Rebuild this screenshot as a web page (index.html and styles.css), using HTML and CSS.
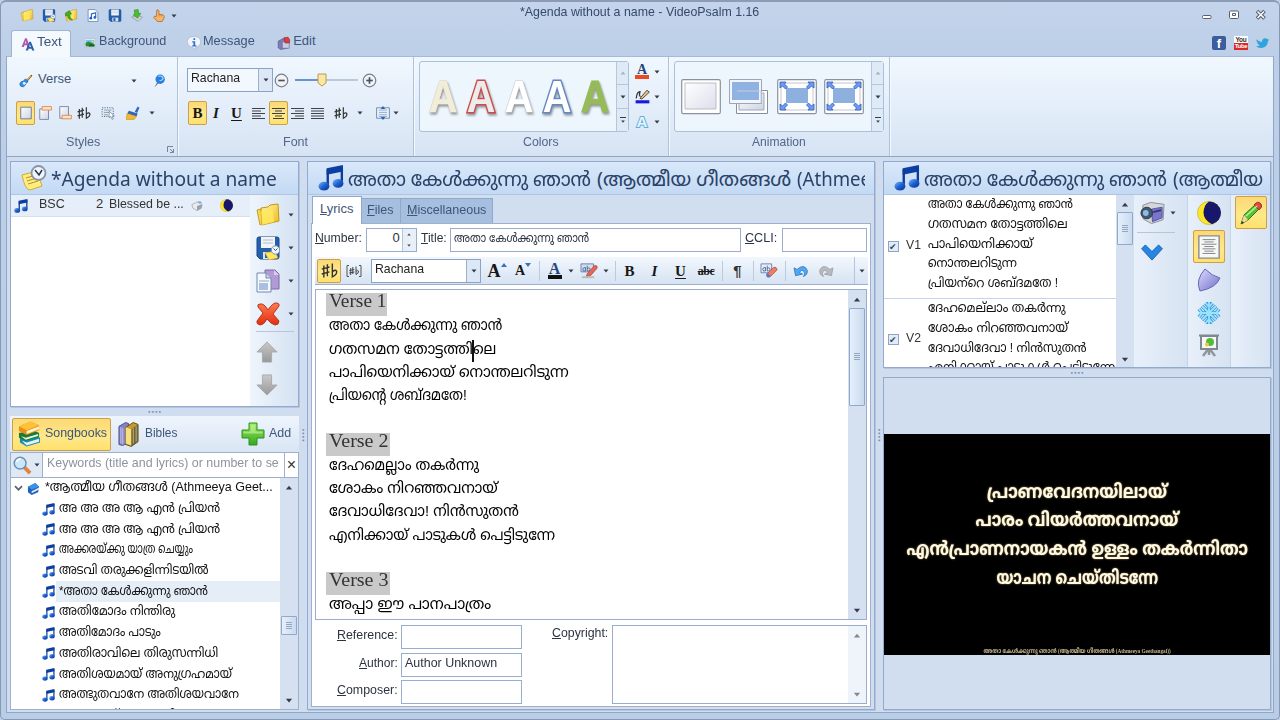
FILE: index.html
```html
<!DOCTYPE html>
<html lang="en">
<head>
<meta charset="utf-8">
<title>VideoPsalm</title>
<link rel="stylesheet" href="styles.css">
</head>
<body>
<svg class="defs" width="0" height="0">
<defs>
<linearGradient id="gy" x1="0" y1="0" x2="1" y2="1"><stop offset="0" stop-color="#fff6a0"/><stop offset="1" stop-color="#efb81c"/></linearGradient>
<linearGradient id="gb" x1="0" y1="0" x2="1" y2="1"><stop offset="0" stop-color="#7ab8f5"/><stop offset=".5" stop-color="#1c5fd0"/><stop offset="1" stop-color="#0a2f8c"/></linearGradient>
<linearGradient id="gg" x1="0" y1="0" x2="0" y2="1"><stop offset="0" stop-color="#9be860"/><stop offset="1" stop-color="#35a820"/></linearGradient>
<linearGradient id="gr" x1="0" y1="0" x2="0" y2="1"><stop offset="0" stop-color="#ff7a50"/><stop offset="1" stop-color="#e22f10"/></linearGradient>
<linearGradient id="gs" x1="0" y1="0" x2="0" y2="1"><stop offset="0" stop-color="#c9c9c9"/><stop offset="1" stop-color="#989898"/></linearGradient>
<linearGradient id="gp" x1="0" y1="0" x2="1" y2="1"><stop offset="0" stop-color="#fff"/><stop offset="1" stop-color="#cdd3e4"/></linearGradient>
<linearGradient id="gv" x1="0" y1="0" x2="1" y2="1"><stop offset="0" stop-color="#dcdcff"/><stop offset="1" stop-color="#6f6cc8"/></linearGradient>
<symbol id="folder" viewBox="0 0 24 24"><path d="M1 7l4-1 2 14-3 2z" fill="#f6d848" stroke="#b98c12" stroke-width=".8"/><path d="M5 5l7-1 2-2 8-1 1 17-17 4z" fill="url(#gy)" stroke="#c4961a" stroke-width="1"/><path d="M5 8l12-2 1 13-12 3z" fill="#ffe95e" opacity=".8"/></symbol>
<symbol id="folder-up" viewBox="0 0 24 24"><use href="#folder"/><path d="M2 8l7-5 4 6-3 1q-1 7 5 10-9 1-9-8l-4 1z" fill="#3fae2a" stroke="#23761a"/></symbol>
<symbol id="floppy" viewBox="0 0 24 24"><path d="M1 3q0-2 2-2h18q2 0 2 2v18q0 2-2 2H4l-3-3z" fill="#245fae" stroke="#17468a"/><path d="M5 1h14v11H5z" fill="#f1f3f7"/><path d="M7 4h10M7 7h10" stroke="#b5bcc8"/><path d="M7 16h11v7H7z" fill="#dce4ee"/><path d="M9 17h4v5H9z" fill="#245fae"/></symbol>
<symbol id="floppy-note" viewBox="0 0 24 24"><use href="#floppy"/><path d="M9 17l10-2 3 7-9 2z" fill="#ffe560" stroke="#c69d22" stroke-width=".6"/><circle cx="19.500" cy="14" r="4.200" fill="#eef5ff" stroke="#7891b8"/><path d="M17.500 12.500l2 2 2-2" fill="none" stroke="#345" stroke-width=".9"/></symbol>
<symbol id="notepage" viewBox="0 0 24 24"><path d="M3 1h13l5 5v17H3z" fill="#fff" stroke="#6885ad" stroke-width="1.500"/><path d="M9 17V9l8-2v8" fill="none" stroke="#1a5fca" stroke-width="2"/><circle cx="8" cy="17" r="2.500" fill="#1a5fca"/><circle cx="15.500" cy="15.500" r="2.500" fill="#1a5fca"/></symbol>
<symbol id="download" viewBox="0 0 24 24"><path d="M2 15l10-4 10 4-8 8z" fill="#ccd0d6" stroke="#7d838e"/><path d="M7 2l7-1 1 7 4 0-6 9-8-6 3-1z" fill="#4cc02c" stroke="#24861a"/></symbol>
<symbol id="hand" viewBox="0 0 24 24"><path d="M8 2q3-2 4 2v6l8 1q3 2 1 6l-3 6H9L2 15q1-3 5-1z" fill="#f5b56c" stroke="#b06b28" stroke-width="1.500"/><path d="M12 10v4M16 10v4" stroke="#b06b28"/></symbol>
<symbol id="caret" viewBox="0 0 6 4"><path d="M.5.500h5L3 3.500z" fill="#333c4c"/></symbol>
<symbol id="aa" viewBox="0 0 24 24"><path d="M1 17L7 2h3l5 15h-4l-1-3H6l-1 3zM7 11h2L8 6z" fill="#b05aa8"/><path d="M8 23l6-15h3l6 15h-4l-1-3h-5l-1 3zM14 17h3l-2-5z" fill="#2e62b0"/></symbol>
<symbol id="picture" viewBox="0 0 24 24"><path d="M1 4h22v17H1z" fill="#f3f7fa" stroke="#a4b3c4"/><path d="M3 6h18v7H3z" fill="#76c4ee"/><path d="M3 12l6-3 12 5v5H3z" fill="#2b8a35"/><path d="M9 19q3-9 8-3l4-1v4z" fill="#1d5c33"/><circle cx="17" cy="9" r="2" fill="#ffd33a"/></symbol>
<symbol id="info" viewBox="0 0 24 24"><path d="M12 1a10 9 0 0 1 3 18l-1 4-5-4A10 9 0 0 1 12 1z" fill="#f0f4fb" stroke="#9aabc9"/><path d="M11 4h3v3h-3zM9 9h5v7h2v2H9v-2h2v-5H9z" fill="#2f6fd0"/></symbol>
<symbol id="editpages" viewBox="0 0 24 24"><path d="M2 9l9-5 8 3-1 14-12 2-4-3z" fill="#7e7bb8" stroke="#4c4880"/><path d="M9 10h12v11H9z" fill="#c7cce4" stroke="#5f6393"/><path d="M12 3l7-1 3 5-1 5h-7z" fill="#d9403c" stroke="#8d2320"/></symbol>
<symbol id="guitar" viewBox="0 0 24 24"><path d="M13 12L22 2" stroke="#5b3a16" stroke-width="2.500"/><path d="M10 9q6-1 5 5-4 1-4 5-3 5-8 2-4-4 1-8 5 0 6-4z" fill="#3190e0" stroke="#1b5e9f"/><circle cx="9" cy="16" r="2.500" fill="#e9f4ff"/><path d="M14 10l7-7" stroke="#e2a63a" stroke-width="2"/></symbol>
<symbol id="pin" viewBox="0 0 24 24"><path d="M10 12L4 23l8-8" fill="#68788e"/><circle cx="14" cy="9" r="8" fill="#2a7fdc"/><path d="M11 4q6-2 8 3-1 5-6 4" fill="none" stroke="#a9d8ff" stroke-width="2"/></symbol>
<symbol id="page" viewBox="0 0 24 24"><path d="M3 2h18v20H3z" fill="url(#gp)" stroke="#5f6f8e" stroke-width="1.500"/></symbol>
<symbol id="page-top" viewBox="0 0 24 24"><path d="M3 5h15v18H3z" fill="url(#gp)" stroke="#6c82a6" stroke-width="1.500"/><path d="M7 1h16v6H7z" fill="#fbe2cb" stroke="#d88a45" stroke-width="1.500"/></symbol>
<symbol id="page-bottom" viewBox="0 0 24 24"><path d="M3 1h15v20H3z" fill="url(#gp)" stroke="#6c82a6" stroke-width="1.500"/><path d="M7 16h16v6H7z" fill="#fbe2cb" stroke="#d88a45" stroke-width="1.500"/></symbol>
<symbol id="sharpflat" viewBox="0 0 24 24"><path d="M4 5v17M9 3v17M1 10l11-3M1 17l11-3" fill="none" stroke="#333" stroke-width="2"/><path d="M16 2v19q7-3 6-8-2-3-6 1" fill="none" stroke="#333" stroke-width="2"/></symbol>
<symbol id="bracketed" viewBox="0 0 16 14"><path d="M3 1.500H1v11h2M13 1.500h2v11h-2" fill="none" stroke="#555"/><path d="M4.700 4v7M6.800 3v7M3.300 6.500l5-1M3.300 9l5-1M10 2.500v8q3-1.500 2.500-3.500-1-1.500-2.500.5" fill="none" stroke="#444" stroke-width="1"/></symbol>
<symbol id="select" viewBox="0 0 24 24"><path d="M2 3h19v15H2z" fill="none" stroke="#4d5c75" stroke-width="1.500" stroke-dasharray="2 2"/><path d="M5 7h13M5 11h9M5 15h7" stroke="#8292aa" stroke-width="1.500"/><path d="M14 9l9 8-4 0 2 5-2 1-2-5-3 2z" fill="#fff" stroke="#536485"/></symbol>
<symbol id="brush" viewBox="0 0 24 24"><path d="M15 10l5-9 3 2-4 9z" fill="#2c67be"/><path d="M5 8l15 5-2 5L2 13z" fill="#2c67be"/><path d="M2 13l16 5-4 5H0z" fill="#f5b930" stroke="#c48a1a"/></symbol>
<symbol id="minus" viewBox="0 0 16 16"><circle cx="8" cy="8" r="6.700" fill="#f1f3f6" stroke="#777f8d" stroke-width="1.300"/><path d="M4.500 8h7" stroke="#4a5361" stroke-width="1.800"/></symbol>
<symbol id="plus" viewBox="0 0 16 16"><use href="#minus"/><path d="M8 4.500v7" stroke="#4a5361" stroke-width="1.800"/></symbol>
<symbol id="al" viewBox="0 0 13 13"><path d="M0 1.500h13M0 4h9M0 6.500h13M0 9h9M0 11.500h13" stroke="#3c4148" stroke-width="1.200"/></symbol>
<symbol id="ac" viewBox="0 0 13 13"><path d="M0 1.500h13M3 4h7M0 6.500h13M3 9h7M1 11.500h11" stroke="#3c4148" stroke-width="1.200"/></symbol>
<symbol id="ar" viewBox="0 0 13 13"><path d="M0 1.500h13M4 4h9M0 6.500h13M4 9h9M0 11.500h13" stroke="#3c4148" stroke-width="1.200"/></symbol>
<symbol id="aj" viewBox="0 0 13 13"><path d="M0 1.500h13M0 4h13M0 6.500h13M0 9h13M0 11.500h13" stroke="#3c4148" stroke-width="1.200"/></symbol>
<symbol id="spacing" viewBox="0 0 24 24"><path d="M1 3h22v18H1z" fill="#e8f0fa" stroke="#6785af" stroke-width="1.500"/><path d="M5 7h14M5 11h14M5 15h14M5 18h14" stroke="#90a6c5" stroke-width="1.500"/><path d="M12 0l4 5H8zM12 24l4-5H8z" fill="#2664ba"/></symbol>
<symbol id="pencil-line" viewBox="0 0 24 24"><path d="M1 18h22v5H1z" fill="#1c18e0"/><path d="M2 15q1-11 6-11-2 8 1 8" fill="none" stroke="#333" stroke-width="2"/><path d="M8 15L19 2l4 3L11 16z" fill="#f1c36a" stroke="#333" stroke-width="1.300"/></symbol>
<symbol id="note" viewBox="0 0 24 24"><path d="M8 3l15-3v6L8 9z" fill="#0b3fa4"/><path d="M9 4v15M22 2v14" stroke="#0d3c98" stroke-width="2.200"/><ellipse cx="5.500" cy="19.500" rx="5" ry="4" fill="url(#gb)"/><ellipse cx="18.500" cy="17" rx="5" ry="4" fill="url(#gb)"/></symbol>
<symbol id="agenda" viewBox="0 0 26 26"><path d="M1 10l15-4 5 15-12 4q-5 0-8-15z" fill="#ffee7c" stroke="#d0aa3a"/><path d="M5 13l10-3M6 16l10-3M7 19l10-3" stroke="#b48e30"/><circle cx="17.500" cy="8" r="7" fill="#eff5fc" stroke="#8a94a8" stroke-width="1.800"/><path d="M14 5l4 5 3-5" fill="none" stroke="#26364c" stroke-width="1.500"/></symbol>
<symbol id="dice" viewBox="0 0 14 12"><path d="M1 5l6-3 6 3-1 4-5 3-5-3z" fill="#e9ebee" stroke="#9ba1a9" stroke-width=".8"/><path d="M7 6.500l6-2-1 5-5 2.500z" fill="#9aa1ab"/><path d="M8 1l4 .5.500 2-4-1z" fill="#61a3d8"/></symbol>
<symbol id="moon" viewBox="0 0 24 24"><circle cx="12" cy="12" r="11.500" fill="#ffe626" stroke="#b9a82c" stroke-width=".6"/><path d="M12 .5A11.500 11.500 0 0 1 15 23.200Q6.500 19 6.500 11.500 6.500 4.500 12 .5z" fill="#17176c"/></symbol>
<symbol id="docs" viewBox="0 0 24 24"><path d="M9 1h10l4 4v15H9z" fill="#b19bd4" stroke="#7e67aa"/><path d="M18 1v5h5" fill="#d9ccef"/><path d="M1 4h9l5 5v14H1z" fill="#f5f8fc" stroke="#7288b0"/><path d="M10 4v5h5" fill="#cbd8ea" stroke="#7288b0"/><path d="M3 14h9v7H3z" fill="#a8bfe0"/><path d="M3 12h10" stroke="#93a9c9"/></symbol>
<symbol id="cross" viewBox="0 0 24 24"><path d="M4 2q4-1 8 6 5-8 9-7 3 1 2 3l-6 8 6 7q0 4-4 4-4-1-8-6-3 6-7 6-4-1-3-4l6-8-5-6q-1-3 2-3z" fill="url(#gr)" stroke="#b8341c"/></symbol>
<symbol id="up" viewBox="0 0 24 24"><path d="M12 1l11 11h-6v11H7V12H1z" fill="url(#gs)" stroke="#a7a9ac"/></symbol>
<symbol id="down" viewBox="0 0 24 24"><path d="M12 23L1 12h6V1h10v11h6z" fill="url(#gs)" stroke="#a7a9ac"/></symbol>
<symbol id="books" viewBox="0 0 24 26"><path d="M2 17l15-3 6 3v5L9 26 2 22z" fill="#178da5"/><path d="M4 20l5 2 13-4v3L9 25z" fill="#e3f2f4"/><path d="M1 12l15-3 6 3v4L8 20l-7-3z" fill="#1c7a36"/><path d="M3 15l5 2 13-4v2L8 19z" fill="#e5f2dc"/><path d="M1 5l12-5 9 4v5L9 14 1 10z" fill="#e79015"/><path d="M1 5l12-5 9 4-13 5z" fill="#ffc138"/><path d="M9 10l13-5v3L9 13z" fill="#fff3c9"/></symbol>
<symbol id="bibles" viewBox="0 0 22 26"><path d="M1 5l7-4 3 1v20l-6 3-4-1z" fill="#8583c5" stroke="#4f4d8c"/><path d="M3 6v17M5 7v17" stroke="#c8c7ee"/><path d="M8 6l8-5 5 2v18l-7 5-6-2z" fill="#c59a2d" stroke="#604a1c"/><path d="M8 6l6 2v17l-6-2z" fill="#f7e07c"/><path d="M14 8l7-5v18l-7 5z" fill="#69633f"/><path d="M16 7v16M19 5v16" stroke="#c9b76c"/></symbol>
<symbol id="add" viewBox="0 0 24 24"><path d="M8 1h8v7h7v8h-7v7H8v-7H1V8h7z" fill="url(#gg)" stroke="#2c9220"/><path d="M9.500 2.500h5v7h7v2h-19v-2h7z" fill="#c9f59c" opacity=".6"/></symbol>
<symbol id="search" viewBox="0 0 20 20"><path d="M11 11l7 7" stroke="#e28538" stroke-width="4"/><circle cx="7.500" cy="7.500" r="6.200" fill="#c8e8fb" stroke="#718eae" stroke-width="1.500"/><path d="M4 6q1-3 4-3" stroke="#fff" stroke-width="2" fill="none"/></symbol>
<symbol id="book" viewBox="0 0 14 14"><path d="M1 5l8-4 4 4-1 6-7 3-4-3z" fill="#1f62bd"/><path d="M1 5l8-4 4 4-8 3z" fill="#3b92e6"/><path d="M5 10l8-4v2l-8 4z" fill="#dcebfa"/></symbol>
<symbol id="eraser" viewBox="0 0 20 18"><path d="M1 1h12v10H1z" fill="#e7edf7" stroke="#667da8"/><path d="M3 7q0-2 3-2v4q-3 1-3-2M8 3v6q4 0 3-3-1-1-3 0" fill="none" stroke="#4b628f"/><path d="M8 12l7-7q4-1 4 3l-7 7q-4 1-4-3z" fill="#ee7c62" stroke="#9b4030" stroke-width=".7"/><path d="M8 11l4 4q-3 3-5 0-1-2 1-4z" fill="#5d76bd"/></symbol>
<symbol id="highlight" viewBox="0 0 20 18"><path d="M1 1h14v9H1z" fill="#d3deed" stroke="#647aa6"/><path d="M3 7q0-2 3-2v4q-3 1-3-2M8 3v6q4 0 3-3-1-1-3 0" fill="none" stroke="#4b628f"/><path d="M8 12l8-9q4-1 3 3l-7 8-5 1z" fill="#e76458" stroke="#953c36" stroke-width=".7"/><path d="M2 15h14v2H2z" fill="#b8b8b8"/></symbol>
<symbol id="undo" viewBox="0 0 20 18"><path d="M1 5l2 10 9-2-4-2q3-5 6-1 2 3-1 6 6-2 5-8-4-9-13-1z" fill="#53a7ee" stroke="#2772bd"/></symbol>
<symbol id="camera" viewBox="0 0 26 24"><path d="M3 4l8-3 14 2-1 16-12 4-9-5z" fill="#d5d6da" stroke="#8b8d96"/><path d="M12 8l11-2v11l-10 4z" fill="#7775cc" stroke="#5553a0"/><path d="M14 10l8-2v2l-8 2z" fill="#35336e"/><circle cx="7" cy="12" r="6" fill="#3d5774" stroke="#30353e"/><circle cx="6" cy="12" r="3" fill="#8cbbe4"/></symbol>
<symbol id="chev" viewBox="0 0 24 18"><path d="M1 5l4-4 7 7 7-7 4 4-11 12z" fill="#2685e2" stroke="#1b60ad"/></symbol>
<symbol id="screenpage" viewBox="0 0 24 26"><path d="M1 1h22v24H1z" fill="#f7f7f5" stroke="#878b92" stroke-width="1.500"/><path d="M5 5h14M7 7.500h10M4 10h16M7 12.500h10M5 15h14M7 17.500h10M5 20h14" stroke="#7b7f85"/></symbol>
<symbol id="shield" viewBox="0 0 24 24"><path d="M8 1q7 7 15 9-4 10-20 13-5-11 5-22z" fill="url(#gv)" stroke="#6964b8"/></symbol>
<symbol id="snow" viewBox="0 0 24 24"><path d="M12 1v22M2 12h20M5 5l14 14M19 5L5 19M8.500 2L12 6l3.500-4M8.500 22l3.500-4 3.500 4M2 8l3 4-3 4M22 8l-3 4 3 4" fill="none" stroke="#3a9ddb" stroke-width="3.600"/><path d="M12 1v22M2 12h20M5 5l14 14M19 5L5 19M8.500 2L12 6l3.500-4M8.500 22l3.500-4 3.500 4M2 8l3 4-3 4M22 8l-3 4 3 4" fill="none" stroke="#9be2ff" stroke-width="1.800"/></symbol>
<symbol id="easel" viewBox="0 0 20 24"><path d="M10 14L4 22M10 14l6 8M10 15v6" stroke="#90969c" stroke-width="2.500"/><path d="M2 2h16v13H2z" fill="#f5f6f7" stroke="#818891" stroke-width="2"/><path d="M0 1.500h20" stroke="#818891" stroke-width="2"/><circle cx="11" cy="8" r="4" fill="#50bc38"/><circle cx="8" cy="10.500" r="2" fill="#f1c53d"/></symbol>
<symbol id="crayon" viewBox="0 0 24 24"><path d="M2 23l3-9L17 3l4 4L9 19z" fill="#55c334" stroke="#267a1a"/><path d="M2 23l3-9 4 5z" fill="#f3d599"/><path d="M2 23l1-3 2 2z" fill="#222"/><path d="M15 4q4-5 7-1 2 3-2 6z" fill="#e34c3d" stroke="#95302a"/><path d="M7 15L18 5" stroke="#b9f294" stroke-width="1.500"/></symbol>
<symbol id="anim0" viewBox="0 0 40 36"><rect x=".7" y=".7" width="38.600" height="34" rx="1.500" fill="#fff" stroke="#8b929d" stroke-width="1.200"/><path d="M4 4h31v26H4z" fill="url(#gp)" stroke="#9ca3ae" opacity=".7"/></symbol>
<symbol id="anim1" viewBox="0 0 40 36"><path d="M7.500 11.500h31v23h-31z" fill="#fff" stroke="#878f9c"/><path d="M10 14h25v17H10z" fill="url(#gp)" stroke="#9da6b6"/><path d="M.5.500h32v24H.5z" fill="#f2f6fc" stroke="#9da6b6"/><path d="M3 3h27v18H3z" fill="#8fb2e2"/><path d="M8 12h24v12" fill="none" stroke="#c3cfe0"/></symbol>
<symbol id="anim2" viewBox="0 0 40 36"><rect x=".7" y=".7" width="38.600" height="34" rx="1.500" fill="#fff" stroke="#8b929d" stroke-width="1.200"/><path d="M4 4h32v27H4z" fill="#fff" stroke="#c0c7d3"/><path d="M9 9h22v15H9z" fill="#8eb0df"/><path d="M3 3h6L7.500 5l3 3-2 2-3-3L3 9zM37 3h-6l1.500 2-3 3 2 2 3-3L37 9zM3 31h6l-1.500-2 3-3-2-2-3 3L3 25zM37 31h-6l1.500-2-3-3 2-2 3 3 2.500-2z" fill="#6f9af0" stroke="#2b5db6" stroke-width=".8"/></symbol>
<symbol id="bird" viewBox="0 0 24 20"><path d="M1 3q4 5 10 5Q11 1 17 1q3 0 4 2l3-1-2 3 2 0-2 2q-1 12-13 12-5 0-9-3 5 0 7-2-4-1-5-4h2Q0 8 1 5z" fill="#2fa3dc"/></symbol>
</defs>
</svg>

<div class="window">
  <header class="titlebar">
    <div class="quick">
      <svg><use href="#folder"/></svg><svg><use href="#floppy-note"/></svg><svg><use href="#folder-up"/></svg><svg><use href="#notepage"/></svg><svg><use href="#floppy"/></svg><svg><use href="#download"/></svg><svg><use href="#hand"/></svg><svg class="caret"><use href="#caret"/></svg>
    </div>
    <div class="wtitle"><span data-w="239">*Agenda without a name - VideoPsalm 1.16</span></div>
    <div class="winbtns">
      <svg viewBox="0 0 12 12"><rect x="1.500" y="6.500" width="8.500" height="3" rx="1" fill="#fff" stroke="#555f70"/></svg>
      <svg viewBox="0 0 12 12"><rect x="1.500" y="2" width="9" height="7.500" rx="1" fill="#fff" stroke="#555f70"/><path d="M4.500 4.500h3v2h-3z" fill="none" stroke="#555f70"/></svg>
      <svg viewBox="0 0 12 12"><path d="M2 2l7.500 7.500M9.500 2L2 9.500" stroke="#555f70" stroke-width="3.600"/><path d="M2.500 2.500L9 9M9 2.500L2.500 9" stroke="#fff" stroke-width="1.500"/></svg>
    </div>
  </header>
  <nav class="tabs">
    <div class="tab on"><svg><use href="#aa"/></svg><span data-w="25">Text</span></div>
    <div class="tab t2"><svg><use href="#picture"/></svg><span data-w="67">Background</span></div>
    <div class="tab t3"><svg><use href="#info"/></svg><span data-w="52">Message</span></div>
    <div class="tab t4"><svg><use href="#editpages"/></svg><span data-w="22">Edit</span></div>
    <div class="social">
      <i class="fb">f</i><i class="yt"><b>You</b><b>Tube</b></i><svg><use href="#bird"/></svg>
    </div>
  </nav>

  <section class="ribbon">
    <div class="group g-styles">
      <div class="srow1"><svg class="i14"><use href="#guitar"/></svg><span class="navy" data-w="33">Verse</span><svg class="caret"><use href="#caret"/></svg><svg class="i14"><use href="#pin"/></svg></div>
      <div class="srow2"><div class="gold"><svg class="i14"><use href="#page"/></svg></div><svg class="i14"><use href="#page-top"/></svg><svg class="i14"><use href="#page-bottom"/></svg><svg class="i14"><use href="#sharpflat"/></svg><svg class="i14"><use href="#select"/></svg><svg class="i14"><use href="#brush"/></svg><svg class="caret"><use href="#caret"/></svg></div>
      <div class="glabel"><span data-w="34">Styles</span><svg class="launch" viewBox="0 0 7 7"><path d="M.5 6V.500H6M3 3l3 3M6.500 3v3.500H3" fill="none" stroke="#7084a4"/></svg></div>
    </div>
    <div class="group g-font">
      <div class="frow1"><div class="combo"><span data-w="49">Rachana</span><div class="dd"><svg class="caret"><use href="#caret"/></svg></div></div><svg class="i16"><use href="#minus"/></svg>
        <svg class="slider" viewBox="0 0 64 16"><path d="M0 8h30" stroke="#6a94d0" stroke-width="2"/><path d="M30 8h33" stroke="#8d9fba"/><path d="M23 2h8v9l-4 3-4-3z" fill="#fbe7a0" stroke="#b99a50"/></svg><svg class="i16"><use href="#plus"/></svg></div>
      <div class="frow2"><div class="gold"><b class="sf">B</b></div><b class="sf it">I</b><b class="sf un">U</b><svg class="i13"><use href="#al"/></svg><div class="gold"><svg class="i13"><use href="#ac"/></svg></div><svg class="i13"><use href="#ar"/></svg><svg class="i13"><use href="#aj"/></svg><svg class="i14"><use href="#sharpflat"/></svg><svg class="caret"><use href="#caret"/></svg><svg class="i14"><use href="#spacing"/></svg><svg class="caret"><use href="#caret"/></svg></div>
      <div class="glabel"><span data-w="25">Font</span></div>
    </div>
    <div class="group g-colors">
      <div class="cwrap">
        <div class="gallery">
          <div class="letters"><b class="l1">A</b><b class="l2">A</b><b class="l3">A</b><b class="l4">A</b><b class="l5">A</b></div>
          <div class="gscroll"><i><svg class="caret flip dim"><use href="#caret"/></svg></i><i><svg class="caret"><use href="#caret"/></svg></i><i class="more"><svg class="caret"><use href="#caret"/></svg></i></div>
        </div>
        <div class="cside"><b class="fa">A</b><svg class="caret"><use href="#caret"/></svg><svg class="i15"><use href="#pencil-line"/></svg><svg class="caret"><use href="#caret"/></svg><b class="fo">A</b><svg class="caret"><use href="#caret"/></svg></div>
      </div>
      <div class="glabel"><span data-w="36">Colors</span></div>
    </div>
    <div class="group g-anim">
      <div class="gallery">
        <div class="anims"><svg><use href="#anim0"/></svg><svg><use href="#anim1"/></svg><svg><use href="#anim2"/></svg><svg><use href="#anim2"/></svg></div>
        <div class="gscroll"><i><svg class="caret flip dim"><use href="#caret"/></svg></i><i><svg class="caret"><use href="#caret"/></svg></i><i class="more"><svg class="caret"><use href="#caret"/></svg></i></div>
      </div>
      <div class="glabel"><span data-w="54">Animation</span></div>
    </div>
  </section>

  <main class="work">
    <div class="left">
      <section class="panel agenda">
        <div class="phead"><svg class="i26"><use href="#agenda"/></svg><span class="big" data-w="226">*Agenda without a name</span></div>
        <div class="abody">
          <div class="alist"><div class="arow"><svg class="i14"><use href="#note"/></svg><span data-w="26">BSC</span><span data-w="7">2</span><span data-w="75">Blessed be ...</span><svg class="dice"><use href="#dice"/></svg><svg class="i13"><use href="#moon"/></svg></div></div>
          <div class="atools">
            <svg class="i24"><use href="#folder"/></svg><svg class="caret"><use href="#caret"/></svg>
            <svg class="i24"><use href="#floppy-note"/></svg><svg class="caret"><use href="#caret"/></svg>
            <svg class="i24"><use href="#docs"/></svg><svg class="caret"><use href="#caret"/></svg>
            <svg class="i24"><use href="#cross"/></svg><svg class="caret"><use href="#caret"/></svg>
            <hr><svg class="i22"><use href="#up"/></svg><i></i><svg class="i22"><use href="#down"/></svg>
          </div>
        </div>
      </section>
      <div class="split">••••</div>
      <section class="songs">
        <div class="stools"><div class="gold sb"><svg><use href="#books"/></svg><span data-w="62">Songbooks</span></div><svg class="bib"><use href="#bibles"/></svg><span data-w="32">Bibles</span><svg class="i24 addi"><use href="#add"/></svg><span data-w="22">Add</span></div>
        <div class="search"><div class="sicon"><svg><use href="#search"/></svg><svg class="caret"><use href="#caret"/></svg></div><div class="sinput"><span data-w="232">Keywords (title and lyrics) or number to se</span></div><div class="sx">×</div></div>
        <div class="tree">
          <div class="items">
            <div class="ti root"><svg class="exp" viewBox="0 0 6 6"><path d="M0 1l3 3 3-3" fill="none" stroke="#5b6472" stroke-width="1.500"/></svg><svg class="i13"><use href="#book"/></svg><span class="ml" data-w="228">*ആത്മീയ ഗീതങ്ങൾ (Athmeeya Geet...</span></div>
            <div class="ti"><svg class="i13"><use href="#note"/></svg><span class="ml" data-w="161">അ അ അ ആ എൻ പ്രിയൻ</span></div>
            <div class="ti"><svg class="i13"><use href="#note"/></svg><span class="ml" data-w="161">അ അ അ ആ എൻ പ്രിയൻ</span></div>
            <div class="ti"><svg class="i13"><use href="#note"/></svg><span class="ml" data-w="134">അക്കരയ്ക്കു യാത്ര ചെയ്യും</span></div>
            <div class="ti"><svg class="i13"><use href="#note"/></svg><span class="ml" data-w="149">അടവി തരുക്കളിന്നിടയിൽ</span></div>
            <div class="ti sel"><svg class="i13"><use href="#note"/></svg><span class="ml" data-w="149">*അതാ കേൾക്കുന്നു ഞാൻ</span></div>
            <div class="ti"><svg class="i13"><use href="#note"/></svg><span class="ml" data-w="116">അതിമോദം നിന്തിരു</span></div>
            <div class="ti"><svg class="i13"><use href="#note"/></svg><span class="ml" data-w="102">അതിമോദം പാടും</span></div>
            <div class="ti"><svg class="i13"><use href="#note"/></svg><span class="ml" data-w="159">അതിരാവിലെ തിരുസന്നിധി</span></div>
            <div class="ti"><svg class="i13"><use href="#note"/></svg><span class="ml" data-w="173">അതിശയമായ് അനുഗ്രഹമായ്</span></div>
            <div class="ti"><svg class="i13"><use href="#note"/></svg><span class="ml" data-w="180">അത്ഭുതവാനേ അതിശയവാനേ</span></div>
            <div class="ti"><span class="ml next" data-w="188">അനന്തസ്നേഹത്തിൽ ആശ്രയം</span></div>
          </div>
          <div class="vbar"><svg class="caret flip"><use href="#caret"/></svg><div class="thumb th1"><i></i></div><svg class="caret"><use href="#caret"/></svg></div>
        </div>
      </section>
    </div>
    <div class="vsplit">••••</div>

    <section class="panel editor">
      <div class="phead"><svg class="i26"><use href="#note"/></svg><div class="bigclip"><span class="big" data-w="243">അതാ കേൾക്കുന്നു ഞാൻ</span><span class="big" data-w="194">(ആത്മീയ ഗീതങ്ങൾ</span><span class="big" data-w="94">(Athmeeya</span></div></div>
      <div class="etabs"><div class="et on"><span data-w="33"><u>L</u>yrics</span></div><div class="et ef"><span data-w="26"><u>F</u>iles</span></div><div class="et em"><span data-w="79"><u>M</u>iscellaneous</span></div></div>
      <div class="ebody">
        <div class="erow"><span data-w="47"><u>N</u>umber:</span><div class="box num"><span>0</span><i><svg class="caret flip"><use href="#caret"/></svg><svg class="caret"><use href="#caret"/></svg></i></div><span data-w="26"><u>T</u>itle:</span><div class="box tit"><span class="ml" data-w="135">അതാ കേൾക്കുന്നു ഞാൻ</span></div><span data-w="32"><u>C</u>CLI:</span><div class="box ccl"></div></div>
        <div class="etool"><div class="gold"><svg class="i18"><use href="#sharpflat"/></svg></div><svg class="br"><use href="#bracketed"/></svg><div class="combo"><span data-w="49">Rachana</span><div class="dd"><svg class="caret"><use href="#caret"/></svg></div></div><b class="sf as">A<i></i></b><b class="sf as sm">A<i></i></b><hr><b class="fa dk">A</b><svg class="caret"><use href="#caret"/></svg><svg class="ic"><use href="#highlight"/></svg><svg class="caret"><use href="#caret"/></svg><hr><b class="sf">B</b><b class="sf it">I</b><b class="sf un">U</b><b class="sf st">abc</b><hr><b class="pil">¶</b><hr><svg class="ic"><use href="#eraser"/></svg><hr><svg class="ic un2"><use href="#undo"/></svg><svg class="ic un2 gray"><use href="#undo"/></svg><div class="end"><svg class="caret"><use href="#caret"/></svg></div></div>
        <div class="text">
          <div class="lines">
            <p class="v"><span data-w="57">Verse 1</span></p>
            <p><span class="ml" data-w="173">അതാ കേൾക്കുന്നു ഞാൻ</span></p>
            <p class="cur"><span class="ml" data-w="167">ഗതസമന തോട്ടത്തിലെ</span><i class="cursor"></i></p>
            <p><span class="ml" data-w="240">പാപിയെനിക്കായ് നൊന്തലറിടുന്ന</span></p>
            <p><span class="ml" data-w="138">പ്രിയന്റെ ശബ്ദമതേ!</span></p>
            <p></p>
            <p class="v"><span data-w="59">Verse 2</span></p>
            <p><span class="ml" data-w="150">ദേഹമെല്ലാം തകർന്നു</span></p>
            <p><span class="ml" data-w="169">ശോകം നിറഞ്ഞവനായ്</span></p>
            <p><span class="ml" data-w="190">ദേവാധിദേവാ! നിൻസുതൻ</span></p>
            <p><span class="ml" data-w="226">എനിക്കായ് പാടുകൾ പെട്ടിടുന്നേ</span></p>
            <p></p>
            <p class="v"><span data-w="59">Verse 3</span></p>
            <p><span class="ml" data-w="162">അപ്പാ ഈ പാനപാത്രം</span></p>
          </div>
          <div class="vbar"><svg class="caret flip"><use href="#caret"/></svg><div class="thumb th2"><i></i></div><svg class="caret"><use href="#caret"/></svg></div>
        </div>
        <div class="form">
          <label><span data-w="61"><u>R</u>eference:</span></label><div class="box"></div>
          <label class="cp"><span data-w="56"><u>C</u>opyright:</span></label>
          <div class="box area"><div class="vbar off"><svg class="caret flip"><use href="#caret"/></svg><svg class="caret"><use href="#caret"/></svg></div></div>
          <label><span data-w="39"><u>A</u>uthor:</span></label><div class="box"><span data-w="92">Author Unknown</span></div>
          <label><span data-w="61"><u>C</u>omposer:</span></label><div class="box"></div>
        </div>
      </div>
    </section>
    <div class="vsplit">••••</div>

    <div class="right">
      <section class="panel live">
        <div class="phead"><svg class="i26"><use href="#note"/></svg><div class="bigclip"><span class="big" data-w="243">അതാ കേൾക്കുന്നു ഞാൻ</span><span class="big" data-w="90">(ആത്മീയ</span></div></div>
        <div class="lbody">
          <div class="verses">
            <div class="vs"><i class="chk">✔</i><span data-w="15">V1</span><div><p><span class="ml" data-w="145">അതാ കേൾക്കുന്നു ഞാൻ</span></p><p><span class="ml" data-w="140">ഗതസമന തോട്ടത്തിലെ</span></p><p><span class="ml" data-w="105">പാപിയെനിക്കായ്</span></p><p><span class="ml" data-w="89">നൊന്തലറിടുന്ന</span></p><p><span class="ml" data-w="130">പ്രിയന്&zwnj;റെ ശബ്ദമതേ !</span></p></div></div>
            <div class="vs v2"><i class="chk">✔</i><span data-w="15">V2</span><div><p><span class="ml" data-w="138">ദേഹമെല്&zwnj;ലാം തകർന്നു</span></p><p><span class="ml" data-w="140">ശോകം നിറഞ്ഞവനായ്</span></p><p><span class="ml" data-w="159">ദേവാധിദേവാ ! നിൻസുതൻ</span></p><p><span class="ml" data-w="187">എനിക്കായ് പാടുകൾ പെട്ടിടുന്നേ</span></p></div></div>
          </div>
          <div class="vbar"><svg class="caret flip"><use href="#caret"/></svg><div class="thumb th3"><i></i></div><svg class="caret"><use href="#caret"/></svg></div>
          <div class="lt c1"><div><svg class="cam"><use href="#camera"/></svg><svg class="caret"><use href="#caret"/></svg></div><hr><svg class="chev"><use href="#chev"/></svg></div>
          <div class="lt c2"><svg class="i24"><use href="#moon"/></svg><div class="gold"><svg class="i24"><use href="#screenpage"/></svg></div><svg class="i24"><use href="#shield"/></svg><svg class="i24"><use href="#snow"/></svg><svg class="i24"><use href="#easel"/></svg></div>
          <div class="lt c3"><div class="gold"><svg class="i24"><use href="#crayon"/></svg></div></div>
        </div>
      </section>
      <div class="split">••••</div>
      <section class="panel preview">
        <div class="slide">
          <p><span class="ml" data-w="180">പ്രാണവേദനയിലായ്</span></p>
          <p><span class="ml" data-w="203">പാരം വിയർത്തവനായ്</span></p>
          <p><span class="ml" data-w="342">എൻപ്രാണനായകൻ ഉള്ളം തകർന്നിതാ</span></p>
          <p><span class="ml" data-w="162">യാചന ചെയ്തിടന്നേ</span></p>
          <footer><span data-w="187">അതാ കേൾക്കുന്നു ഞാൻ (ആത്മീയ ഗീതങ്ങൾ (Athmeeya Geethangal))</span></footer>
        </div>
      </section>
    </div>
  </main>
</div>
<script src="fit.js"></script>
</body>
</html>
```
FILE: styles.css
```css
*{box-sizing:border-box}
body{margin:0;width:1280px;height:720px;overflow:hidden;font:13px/16px "Liberation Sans",Arial,"Noto Sans Malayalam","Noto Sans",sans-serif;color:#2c3442;background:#bfd1e9}
p,hr{margin:0}
.defs{position:absolute}
svg{display:block;flex:none;overflow:visible}
[data-w]{display:inline-block;white-space:nowrap;transform-origin:0 50%;flex:none;justify-self:start}
.window{width:1280px;height:720px;border:1px solid #8698b4;border-top:2px solid #8a9cb6;border-radius:6px 6px 5px 5px;background:linear-gradient(#c3d4eb,#bccfe8 60px,#b9cde7);padding:0 5px 6px;display:flex;flex-direction:column}
.titlebar{height:28px;flex:none;display:grid;grid-template-columns:514px 1fr 73px;align-items:start}
.quick{display:grid;grid-template-columns:repeat(7,22px) 10px;padding:7px 0 0 14px;align-items:center}
.quick svg{width:14px;height:13px}
.quick svg.caret{margin-left:-3px}
.wtitle{padding-top:2px;color:#35496c}
.winbtns{display:flex;gap:15px;padding-top:7px}
.winbtns svg{width:12px;height:12px}
svg.caret,.quick svg.caret{width:6px;height:4px}
.flip{transform:scaleY(-1)}
.dim{opacity:.3}
.tabs{height:26px;flex:none;display:flex;padding-left:5px;color:#3e5679}
.tab{display:flex;align-items:center;padding:0 10px 4px}
.tab svg{width:14px;height:14px;margin:4px 2px 0 0}
.tab.on{width:60px;background:#f4f9fe;border:1px solid #9db3d0;border-bottom:0;border-radius:3px 3px 0 0;padding:0 0 4px 9px;margin-bottom:-1px;z-index:1}
.t2{margin-left:3px}.t2 svg{width:12px;height:12px;margin-right:3px}.t3{margin-left:1px}.t4{margin-left:2px}
.social{margin-left:auto;display:flex;gap:8px;padding:6px 5px 0 0}
.social i{width:14px;height:14px;font-style:normal;text-align:center}
.fb{background:#3b5c9e;color:#fff;border-radius:2px;font:bold 13px/15px "Liberation Sans"}
.yt{background:#fff;font:bold 6.500px/7px "Liberation Sans";letter-spacing:-.3px;color:#333}
.yt b{display:block}.yt b+b{background:#d92a28;color:#fff;font-size:6px}
.social svg{width:13px;height:12px;margin-top:1px}
.ribbon{height:101px;flex:none;display:flex;background:linear-gradient(#f0f7fe,#e4eefa 50%,#d6e3f3);border:1px solid #8fa6c5;border-top-color:#a6bad5}
.group{border-right:1px solid #b0c2da;display:flex;flex-direction:column;box-shadow:1px 0 #f4f9ff}
.g-styles{width:171px}.g-font{width:236px}.g-colors{width:255px}.g-anim{width:221px}
.glabel{margin-top:auto;height:26px;padding-top:4px;text-align:center;color:#51668a;position:relative}
.g-styles .glabel{padding-right:17px}
.g-colors .glabel,.g-anim .glabel{padding-top:4px;margin-top:-2px}
.launch{position:absolute;right:3px;bottom:3px;width:7px;height:7px}
.i13{width:13px;height:13px}.i14{width:14px;height:14px}.i15{width:15px;height:15px}.i16{width:15px;height:15px}.i18{width:17px;height:17px}.i22{width:22px;height:22px}.i24{width:24px;height:24px}.i26{width:26px;height:26px}
.navy{color:#3e5679}
.gold{background:linear-gradient(#fbd975,#ffe88a 60%,#ffe06a);border:1px solid #c9a04e;border-radius:2px;display:flex;align-items:center;justify-content:center}
.srow1{display:grid;grid-template-columns:19px 93px 21px 14px;padding:12px 0 0 12px;align-items:center;height:36px}
.srow1 span{margin-top:-5px}
.srow2{display:grid;grid-template-columns:22px 20px 19px 24px 25px 23px 8px;padding:8px 0 0 9px;align-items:center}
.srow2 .gold,.frow2 .gold{width:19px;height:24px}
.combo{height:24px;border:1px solid #8ba3c4;background:#f2f8fe;display:flex;justify-content:space-between;padding:1px 0 0 3px;color:#222}
.combo .dd{width:14px;margin-top:-1px;border-left:1px solid #9ab0cd;background:#dce8f6;display:flex;align-items:center;justify-content:center}
.frow1{display:grid;grid-template-columns:86px 22px 66px 16px;padding:11px 0 0 9px;align-items:center}
.frow1 .i16{margin-left:1px}
.slider{width:64px;height:16px}
.frow2{display:grid;grid-template-columns:23px 18px 23px 17px 22px 20px 23px 23px 19px 17px 8px;padding:9px 0 0 10px;align-items:center}
.frow2>.sf{padding-left:2px}
.sf{font:bold 15px/16px "Liberation Serif",serif;color:#181818}
.it{font-style:italic}.un{text-decoration:underline;text-underline-offset:2px}
.cwrap{display:flex;height:75px}
.gallery{width:210px;height:71px;margin:4px 0 0 5px;border:1px solid #abc0da;border-radius:3px;background:#edf5fd;display:flex;justify-content:space-between;flex:none}
.letters{display:flex;padding:12px 0 0 4px}
.letters b{width:38px;text-align:center;font:bold 44px/46px "Liberation Sans";paint-order:stroke;filter:drop-shadow(1px 2px 1px #0006);transform:scaleX(.9)}
.l1{color:#f2ecda;-webkit-text-stroke:1px #dcd3ba}
.l2{color:#ececec;-webkit-text-stroke:3px #cf4a49}
.l3{color:#fff;-webkit-text-stroke:1px #c8ccd2}
.l4{color:#fff;-webkit-text-stroke:3px #6288c2}
.l5{color:#97ba58;-webkit-text-stroke:1px #97ba58}
.gscroll{width:12px;border-left:1px solid #b4c7de;display:grid;grid-template-rows:22px 24px 1fr;flex:none}
.gscroll i{display:flex;align-items:center;justify-content:center;background:#dfeaf7}
.gscroll i+i{border-top:1px solid #b4c7de}
.gscroll .more svg{border-top:1px solid #333c4c;height:6px;padding-top:2px}
.cside{display:grid;grid-template-columns:19px 8px;grid-auto-rows:25px;align-items:center;padding:2px 0 0 6px;height:75px}
.fa{font:bold 14px/12px "Liberation Serif";width:14px;height:15px;border-bottom:4px solid #ea4b22;text-align:center;color:#26467c}
.fa.dk{border-color:#111;font-size:16px;line-height:13px;height:17px}
.fo{font:bold 15px/15px "Liberation Sans";color:#e6f6ff;-webkit-text-stroke:2px #63aedb;paint-order:stroke;width:14px;text-align:center}
.anims{display:flex;gap:8px;padding:17px 0 0 6px}
.anims svg{width:40px;height:36px}
.anims svg:nth-child(n+3){margin-left:-.5px}
.work{flex:1;display:flex;padding:4px 2px 2px 3px;background:#cfddef;border:solid #8fa6c5;border-width:0 1px 1px;min-height:0}
.left{width:289px;display:flex;flex-direction:column}
.panel{border:1px solid #93aace;background:#d0deef;box-shadow:1px 1px #b3c5df;overflow:hidden}
.phead{height:33px;flex:none;display:flex;align-items:center;background:linear-gradient(#d9e8fa,#c3d9f4);border-bottom:1px solid #afc5e2}
.phead>.i26{margin-left:10px}
.big{font:20px/30px "Noto Sans","Noto Sans Malayalam",sans-serif;color:#2a4268;margin-top:1px}
.agenda{height:246px;display:flex;flex-direction:column}
.agenda .big{margin-left:4px;margin-top:2px}
.abody{flex:1;display:flex}
.alist{width:239px;background:#fff}
.arow{height:22px;background:#e5eef9;border-bottom:1px solid #d3e0ef;display:grid;grid-template-columns:25px 57px 13px 82px 29px 14px;padding-left:3px;align-items:center;color:#333}
.arow span{margin-top:-4px}
.dice{width:12px;height:11px}
.atools{flex:1;background:linear-gradient(90deg,#eff5fc,#d4e2f2);display:grid;grid-template-columns:32px 6px;grid-template-rows:33px 33px 33px 33px 2px 40px 26px;align-items:center;padding:3px 0 0 6px}
.atools hr{grid-column:1/3;border:0;border-top:1px solid #b4c5dc;width:38px}
.split{height:9px;text-align:center;font:6px/9px "DejaVu Sans";color:#7387a6}
.vsplit{width:8px;flex:none;writing-mode:vertical-rl;text-align:center;font:6px/8px "DejaVu Sans";color:#7387a6}
.songs{height:294px;display:flex;flex-direction:column}
.stools{height:36px;background:linear-gradient(#eef5fd,#d9e5f4);display:grid;grid-template-columns:106px 27px 96px 28px 24px;padding-left:2px;align-items:center;color:#3e5679}
.stools .sb{width:99px;height:33px;justify-content:flex-start;padding-left:5px;gap:4px}
.sb svg{width:23px;height:26px}
.stools>span,.sb span{margin-top:-3px}
.bib{width:21px;height:26px}
.search{height:26px;display:flex;border:1px solid #9db1cf;background:#fff}
.sicon{width:32px;background:#dfe9f6;border-right:1px solid #9db1cf;display:flex;align-items:center;padding-left:2px;gap:2px}
.sicon svg:first-child{width:19px;height:19px}
.sinput{width:241px;padding:2px 0 0 4px;color:#8d939d}
.sx{flex:1;border-left:1px solid #9db1cf;text-align:center;font-size:16px;line-height:24px;color:#333}
.tree{flex:1;min-height:0;display:flex;border:1px solid #9db1cf;border-top:0;background:#fff}
.items{flex:1;overflow:hidden;min-width:0}
.ti{height:20.700px;display:flex;align-items:center;padding-left:31px;gap:4px;color:#111}
.ti span{font-size:13px;line-height:20px;margin-top:-2px}
.ti .next{margin-left:17px}
.ti.root{padding-left:4px;gap:5px;margin-top:0}
.exp{width:7px;height:7px}
.sel{background:linear-gradient(90deg,#fff 45px,#e5edf7 45px)}
.vbar{width:18px;flex:none;background:#d5e1f0;display:flex;flex-direction:column;align-items:center;padding:7px 0 6px}
.vbar svg.caret{width:8px;height:5px}
.vbar>svg:last-child{margin-top:auto}
.thumb{width:16px;border:1px solid #8fa8cb;border-radius:1px;background:linear-gradient(90deg,#e6f0fb,#c9daef);display:flex;align-items:center;justify-content:center}
.thumb i{width:6px;height:8px;background:repeating-linear-gradient(#93a6c2 0 1px,transparent 1px 2px)}
.th1{height:19px;margin-top:126px}.th2{height:98px;margin-top:6px}.th3{height:33px;margin-top:5px}
.editor{width:568px;display:flex;flex-direction:column;padding:0 3px 2px}
.editor .phead{margin:0 -3px}
.bigclip{display:flex;gap:6px;overflow:hidden;margin-left:4px;height:32px;align-items:center}
.editor .bigclip{width:517px}
.etabs{display:flex;height:30px;align-items:flex-end;padding-left:1px;color:#3e5679}
.et{height:25px;border:1px solid #8fa8cb;border-bottom:0;background:#a6bfdf;padding:3px 5px;border-left-width:0}
.ef{width:39px}.em{width:92px;padding-left:6px}
.et.on{height:28px;width:50px;background:#fff;border-left-width:1px;padding:4px 7px;margin-bottom:-1px;z-index:1;position:relative}
.ebody{flex:1;background:#fff;border:1px solid #9db1cf;padding:3px 3px 2px}
.erow{display:flex;align-items:flex-start;height:30px;padding-top:1px}
.box{height:24px;border:1px solid #9aaecb;background:#fff;padding:1px 3px;overflow:hidden}
.num{width:51px;margin:0 4px;padding:1px 0 0;display:flex;justify-content:flex-end;gap:2px}
.num i{width:14px;margin-top:-1px;border-left:1px solid #b5c5db;background:#e7eff8;display:flex;flex-direction:column;align-items:center;justify-content:space-around}
.num svg.caret{width:4px;height:3px}
.tit{width:292px;margin:0 4px}.ccl{width:85px;margin-left:5px}
.erow>span{margin-top:2px}
.tit .ml{font-size:12px}
.etool{height:28px;background:linear-gradient(#f2f7fd,#d6e3f3);border-bottom:1px solid #9db1cf;display:grid;grid-template-columns:31px 25px 110px 30px 22px 12px 19px 14px 22px 12px 6px 23px 27px 25px 26px 6px 25px 7px 24px 8px 23px 28px 1fr;align-items:center;justify-items:center;margin-right:-1px}
.etool .gold{width:24px;height:24px;justify-self:start;margin-left:2px}
.br{width:16px;height:14px;justify-self:start}
.etool .combo{width:110px;background:#fff}
.as{font-size:18px;display:flex}
.as i{width:0;height:0;border:3px solid transparent;border-bottom:4px solid #3b72b6;border-top:0;margin-right:-2px}
.as.sm{font-size:14px}.as.sm i{border-bottom:0;border-top:4px solid #3b72b6}
.etool hr{border:0;border-left:1px solid #bccadd;height:20px}
.ic{width:18px;height:16px}.un2{width:16px;height:14px}
.sf.st{font:bold 12px/16px "Liberation Serif";text-decoration:line-through;letter-spacing:-.5px}
.pil{font:bold 15px/16px "Liberation Sans";color:#333}
.gray{filter:grayscale(1);opacity:.6;transform:scaleX(-1)}
.end{justify-self:end;width:14px;height:27px;border-left:1px solid #b5c5db;display:flex;align-items:center;justify-content:center}
.text{height:331px;margin-top:4px;border:1px solid #9aaecb;display:flex}
.lines{flex:1;padding:3px 0 0 13px;overflow:hidden}
.lines p{height:23.250px;line-height:17px;color:#000;position:relative}
.lines .ml{font-size:15px;line-height:17px}
.lines .v{margin:0 0 0 -3px;padding-left:3px;color:#333;font:18px/16px "Liberation Serif";background:#c9c9c9;width:64px}
.lines p.v:first-child{width:61px}
.cursor{position:absolute;left:143px;top:0;width:2px;height:22px;background:#111}
.form{display:grid;grid-template-columns:83px 121px 89px 1px 1fr;grid-template-rows:24px 24px 24px;row-gap:3.500px;padding-top:5px}
.form label{grid-column:1;text-align:right;padding-top:2px}
.form .box{grid-column:2;margin-left:3px;width:121px}
.form .cp{grid-column:3;grid-row:1;margin-top:-2px}
.form .area{grid-column:5;grid-row:1/4;width:auto;height:79px;padding:0;display:flex;justify-content:flex-end}
.off{background:#e4edf7;opacity:.6}
.right{flex:1;display:flex;flex-direction:column}
.live{height:207px}
.live .bigclip{width:340px}
.lbody{display:flex;height:173px}
.verses{width:232px;background:#fff;overflow:hidden;contain:paint}
.vs{height:104px;display:grid;grid-template-columns:18px 22px 1fr;align-items:center;padding-left:4px;border-bottom:1px solid #c5d5e9;color:#333}
.vs p{height:19.800px;line-height:20px;color:#111}
.vs p .ml{font-size:13px;line-height:20px}
.vs>div{align-self:start;margin-top:-1px}
.vs>span{margin-top:-4px}
.chk{width:11px;height:11px;border:1px solid #8da5c6;background:#e2ebf6;font:9px/10px "DejaVu Sans";color:#2d4668;font-style:normal}
.v2{height:87px}
.v2>.chk,.v2>span{margin-top:-5px}
.v2>span{margin-top:-8px}
.lt{background:linear-gradient(90deg,#e8f0fa,#d6e3f2);display:flex;flex-direction:column;align-items:center}
.c1{width:53px;padding-top:6px;align-items:flex-start;padding-left:6px}
.c1 div{display:flex;align-items:center;gap:5px}
.cam{width:25px;height:24px}.c1 hr{width:38px;border:0;border-top:1px solid #b4c5dc;margin:7px 0 11px -3px}
.chev{width:24px;height:17px}
.c2{width:43px;padding-top:6px;gap:9px;border-left:1px solid #c5d4e7}
.c2 .gold,.c3 .gold{width:32px;height:33px;margin:-4px 0;flex:none}
.c3{flex:1;padding-top:5px;border-left:1px solid #c5d4e7}
.c2>.i24:last-child{width:20px}
.preview{height:334px;padding-top:56px}
.slide{height:221px;background:#000;text-align:center;padding-top:43px;color:#fff8e2;display:flex;flex-direction:column}
.slide p{height:28.800px;line-height:29px}
.slide .ml{font-size:19px;font-weight:bold;text-shadow:0 0 2px #bfa66b}
.slide footer{margin-top:auto;font:bold 6.500px/8px "Liberation Serif","Noto Sans Malayalam",serif;color:#c9b992}
.slide [data-w]{transform-origin:50% 50%}
```
FILE: fit.js
```js
// Scales each label horizontally to its nominal width while keeping the box in flow.
document.querySelectorAll('[data-w]').forEach(function (el) {
  var target = parseFloat(el.dataset.w), natural = el.offsetWidth;
  if (!natural) return;
  var extra = target - natural, centered = el.closest('.slide');
  el.style.transform = 'scaleX(' + target / natural + ')';
  if (centered) { el.style.marginLeft = el.style.marginRight = extra / 2 + 'px'; }
  else { el.style.marginRight = extra + 'px'; }
});
```
